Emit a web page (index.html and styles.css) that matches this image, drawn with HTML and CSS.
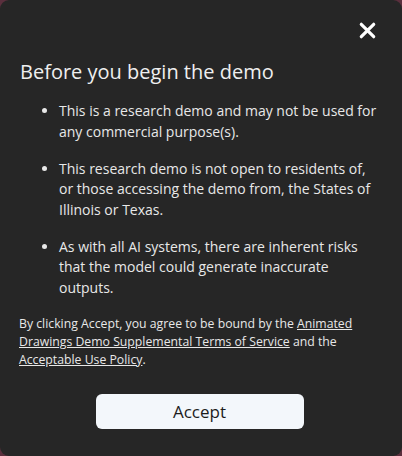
FILE: index.html
```html
<!DOCTYPE html>
<html lang="en">
<head>
    <meta charset="UTF-8">
    <meta name="viewport" content="width=device-width, initial-scale=1.0">
    <title>Before you begin the demo</title>
    <link rel="stylesheet" href="styles.css">
</head>
<body>
    <div class="modal">
        <div class="modal-top">
            <button class="close-btn" type="button" aria-label="Close">
                <svg width="17" height="17" viewBox="0 0 17 17">
                    <path d="M2.3 2.3 L14.7 14.7 M14.7 2.3 L2.3 14.7" stroke="#fff" stroke-width="3.2" stroke-linecap="round"/>
                </svg>
            </button>
        </div>
        <h2>Before you begin the demo</h2>
        <ul class="notes">
            <li>This is a research demo and may not be used for any commercial purpose(s).</li>
            <li>This research demo is not open to residents of, or those accessing the demo from, the States of Illinois or Texas.</li>
            <li>As with all AI systems, there are inherent risks that the model could generate inaccurate outputs.</li>
        </ul>
        <p class="terms">By clicking Accept, you agree to be bound by the <a href="#">Animated Drawings Demo Supplemental Terms of Service</a> and the <a href="#">Acceptable Use Policy</a>.</p>
        <div class="actions">
            <button class="accept-btn" type="button">Accept</button>
        </div>
    </div>
</body>
</html>
```

FILE: styles.css
```css
body {
    margin: 0;
    background-color: #5a2f3d;
    font-family: "Open Sans", "Noto Sans", sans-serif;
}
.modal {
    box-sizing: border-box;
    width: 402px;
    height: 456px;
    background-color: #262626;
    border-radius: 9px;
    padding: 22px 20px 0 19px;
    color: #e8e8e8;
}
.modal-top {
    display: flex;
    justify-content: flex-end;
}
.close-btn {
    display: block;
    background: none;
    border: none;
    padding: 0;
    width: 17px;
    height: 17px;
    margin-right: 6px;
    cursor: pointer;
}
.close-btn svg {
    display: block;
}
.modal h2 {
    margin: 19px 0 0 1px;
    font-size: 20px;
    font-weight: 400;
    line-height: 28px;
    color: #efefef;
}
.notes {
    margin: 15px 0 0;
    padding-left: 40px;
    font-size: 14px;
    font-weight: 500;
    line-height: 20.5px;
}
.notes li {
    margin-bottom: 16.5px;
}
.terms {
    margin: 0;
    font-size: 12.25px;
    font-weight: 500;
    line-height: 18px;
}
.terms a {
    color: #e8e8e8;
}
.actions {
    display: flex;
    justify-content: center;
    margin-top: 25px;
    margin-right: 2px;
}
.accept-btn {
    width: 208px;
    height: 35px;
    border: none;
    border-radius: 6px;
    background-color: #f3f7fb;
    color: #1c1c1c;
    font-family: "Open Sans", "Noto Sans", sans-serif;
    font-size: 17px;
    font-weight: 500;
    cursor: pointer;
}
```
